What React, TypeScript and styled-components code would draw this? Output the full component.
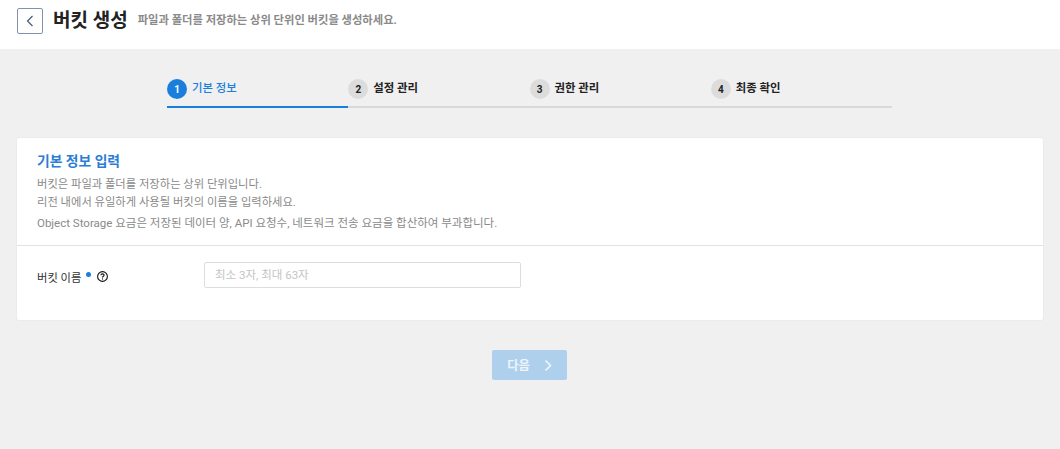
import React, { FC } from 'react';
import styled, { createGlobalStyle } from 'styled-components';

const GlobalStyle = createGlobalStyle`
  html, body {
    margin: 0;
    padding: 0;
    background: #f0f0f0;
  }
  * {
    box-sizing: border-box;
  }
  body {
    font-family: Roboto, 'Noto Sans CJK KR', sans-serif;
  }
`;

const Page = styled.div`
  width: 1060px;
  height: 449px;
  overflow: hidden;
  background: #f0f0f0;
`;

const Header = styled.header`
  height: 49px;
  background: #fff;
  display: flex;
  align-items: flex-start;
  padding: 8px 17px 0;
`;

const BackButton = styled.button`
  width: 26px;
  height: 26px;
  padding: 0;
  border: 1px solid #8093ab;
  border-radius: 2px;
  background: #fff;
  display: flex;
  align-items: center;
  justify-content: center;
  margin-right: 10px;
`;

const Title = styled.h1`
  margin: 0 10px 0 0;
  font-size: 19px;
  line-height: 26px;
  font-weight: 700;
  color: #222;
`;

const Subtitle = styled.span`
  font-size: 11.3px;
  line-height: 26px;
  font-weight: 700;
  color: #8a8a8a;
`;

const Steps = styled.ol`
  list-style: none;
  margin: 30px 168px 0 167px;
  padding: 0;
  display: grid;
  grid-template-columns: repeat(4, 1fr);
`;

const Step = styled.li<{ $active?: boolean }>`
  height: 29px;
  display: flex;
  align-items: flex-start;
  gap: 5px;
  border-bottom: 2px solid ${(props) => (props.$active ? '#1a7fdc' : '#d9d9d9')};
  color: ${(props) => (props.$active ? '#1a7fdc' : '#222')};
  font-size: 11.4px;
  line-height: 19px;
  font-weight: ${(props) => (props.$active ? 500 : 700)};
`;

const StepNumber = styled.span<{ $active?: boolean }>`
  width: 20px;
  height: 20px;
  border-radius: 50%;
  display: flex;
  align-items: center;
  justify-content: center;
  background: ${(props) => (props.$active ? '#1a7fdc' : '#dcdcdc')};
  color: ${(props) => (props.$active ? '#fff' : '#222')};
  font-size: 10px;
  font-weight: 700;
`;

const Card = styled.section`
  margin: 29px 16px 0;
  height: 184px;
  background: #fff;
  border: 1px solid #ebebeb;
  border-radius: 3px;
`;

const CardHead = styled.div`
  height: 108px;
  padding: 14px 20px 0;
  border-bottom: 1px solid #e2e2e2;
`;

const CardTitle = styled.h2`
  margin: 0 0 6px;
  font-size: 13.8px;
  line-height: 18px;
  font-weight: 700;
  color: #2a7dd6;
`;

const Desc = styled.p<{ $note?: boolean }>`
  margin: ${(props) => (props.$note ? '2px' : '0')} 0 0;
  font-size: ${(props) => (props.$note ? '11.5px' : '11.3px')};
  line-height: 18px;
  color: #8a8a8a;
`;

const FieldRow = styled.div`
  display: flex;
  align-items: center;
  padding: 16px 20px 0;
`;

const Label = styled.label`
  width: 167px;
  padding-top: 3px;
  display: flex;
  align-items: center;
  font-size: 11.3px;
  color: #333;
`;

const RequiredDot = styled.i`
  width: 5px;
  height: 5px;
  margin: -5px 6px 0 5px;
  border-radius: 50%;
  background: #1a7fdc;
`;

const NameInput = styled.input`
  width: 317px;
  height: 26px;
  padding: 0 10px;
  border: 1px solid #ddd;
  border-radius: 2px;
  font-family: inherit;
  font-size: 11.5px;
  &::placeholder {
    color: #c4c4c4;
  }
`;

const Footer = styled.div`
  display: flex;
  justify-content: center;
  margin-top: 29px;
  padding-right: 1px;
`;

const NextButton = styled.button`
  width: 75px;
  height: 30px;
  padding: 0;
  border: 0;
  border-radius: 2px;
  background: #aed0ed;
  color: #eef5fb;
  font-family: inherit;
  font-size: 12.3px;
  font-weight: 700;
  display: flex;
  align-items: center;
  justify-content: center;
  gap: 14px;
`;

const STEPS = ['기본 정보', '설정 관리', '권한 관리', '최종 확인'];

const App: FC = () => {
  return (
    <Page>
      <GlobalStyle />
      <Header>
        <BackButton aria-label={'뒤로'}>
          <svg width="8" height="12" viewBox="0 0 8 12" fill="none" stroke="#4a5a70" strokeWidth="1.2">
            <path d="M6.5 1 L1.5 6 L6.5 11" />
          </svg>
        </BackButton>
        <Title>버킷 생성</Title>
        <Subtitle>파일과 폴더를 저장하는 상위 단위인 버킷을 생성하세요.</Subtitle>
      </Header>
      <Steps>
        {STEPS.map((name, i) => (
          <Step key={name} $active={i === 0}>
            <StepNumber $active={i === 0}>{i + 1}</StepNumber>
            {name}
          </Step>
        ))}
      </Steps>
      <Card>
        <CardHead>
          <CardTitle>기본 정보 입력</CardTitle>
          <Desc>버킷은 파일과 폴더를 저장하는 상위 단위입니다.</Desc>
          <Desc>리전 내에서 유일하게 사용될 버킷의 이름을 입력하세요.</Desc>
          <Desc $note>Object Storage 요금은 저장된 데이터 양, API 요청수, 네트워크 전송 요금을 합산하여 부과합니다.</Desc>
        </CardHead>
        <FieldRow>
          <Label>
            버킷 이름
            <RequiredDot />
            <svg width="11" height="11" viewBox="0 0 11 11" fill="none" stroke="#111" strokeWidth="1.1">
              <circle cx="5.5" cy="5.5" r="4.9" />
              <path d="M3.9 4.3 C3.9 2.4 7.1 2.4 7.1 4.2 C7.1 5.3 5.5 5.3 5.5 6.6" />
              <path d="M5.5 7.4 V8.6" />
            </svg>
          </Label>
          <NameInput placeholder={'최소 3자, 최대 63자'} />
        </FieldRow>
      </Card>
      <Footer>
        <NextButton>
          다음
          <svg width="8" height="13" viewBox="0 0 8 13" fill="none" stroke="#eef5fb" strokeWidth="1.6">
            <path d="M1.5 1.5 L6.5 6.5 L1.5 11.5" />
          </svg>
        </NextButton>
      </Footer>
    </Page>
  );
};

export default App;
